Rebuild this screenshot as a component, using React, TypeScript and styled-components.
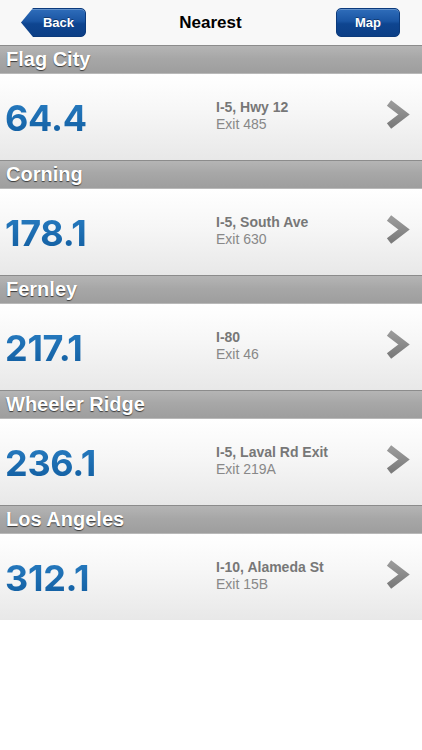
import React from "react";
import styled, { createGlobalStyle } from "styled-components";

const Global = createGlobalStyle`
  html, body { margin: 0; padding: 0; background: #ffffff; }
  body { font-family: "Liberation Sans", Arial, sans-serif; -webkit-font-smoothing: antialiased; }
`;

const Page = styled.div`
  width: 422px;
  min-height: 750px;
  background: #ffffff;
`;

const NavBar = styled.div`
  height: 45px;
  display: grid;
  grid-template-columns: 1fr auto 1fr;
  align-items: center;
  padding: 0 22px 0 21px;
  box-sizing: border-box;
  background: #f8f8f8;
`;

const Title = styled.div`
  font-size: 17px;
  font-weight: 700;
  color: #000;
  margin-top: 1px;
`;

const NavButton = styled.div<{ $back?: boolean }>`
  justify-self: ${(p) => (p.$back ? "start" : "end")};
  width: ${(p) => (p.$back ? "65px" : "64px")};
  height: 29px;
  box-sizing: border-box;
  display: flex;
  align-items: center;
  justify-content: center;
  padding-left: ${(p) => (p.$back ? "10px" : "0")};
  color: #fff;
  font-size: 13px;
  font-weight: 700;
  background: linear-gradient(#2f6dba 0%, #1a55a3 45%, #0e4590 55%, #0c3f86 100%);
  border: 1px solid #0b3a7c;
  border-radius: ${(p) => (p.$back ? "0 5px 5px 0" : "5px")};
  box-shadow: inset 0 1px 0 rgba(255, 255, 255, 0.25);
  clip-path: ${(p) =>
    p.$back ? "polygon(0 50%, 12px 0, 100% 0, 100% 100%, 12px 100%)" : "none"};
  text-shadow: 0 -1px 0 rgba(0, 0, 0, 0.35);
`;

const SectionHeader = styled.div`
  height: 29px;
  box-sizing: border-box;
  display: flex;
  align-items: center;
  padding-left: 6px;
  border-top: 1px solid #8c8c8c;
  border-bottom: 1px solid #b9b9b9;
  background: linear-gradient(#b5b5b5 0%, #a7a7a7 45%, #9e9e9e 100%);
  color: #fff;
  font-size: 20px;
  font-weight: 700;
  text-shadow: 0 1px 1px rgba(0, 0, 0, 0.65);
`;

const Row = styled.div`
  height: 86px;
  box-sizing: border-box;
  display: grid;
  grid-template-columns: 211px 1fr auto;
  align-items: center;
  padding: 0 12px 0 5px;
  background: linear-gradient(#ffffff 0%, #f6f6f6 45%, #e8e8e8 100%);
`;

const Miles = styled.div`
  font-family: Inter, "Liberation Sans", sans-serif;
  font-variant-numeric: proportional-nums;
  font-size: 36px;
  font-weight: 700;
  letter-spacing: -0.3px;
  color: #1767ab;
  background: linear-gradient(#2a7fc4, #0f5b9e);
  -webkit-background-clip: text;
  background-clip: text;
  -webkit-text-fill-color: transparent;
  margin-top: 1px;
`;

const Info = styled.div`
  display: flex;
  flex-direction: column;
  margin-bottom: 4px;
`;

const Road = styled.div`
  font-size: 14px;
  font-weight: 700;
  color: #777777;
  line-height: 17px;
`;

const ExitText = styled.div`
  font-size: 14px;
  color: #888888;
  line-height: 16px;
`;

const Chevron = styled.svg`
  width: 25px;
  height: 29px;
  margin-bottom: 5px;
  display: block;
`;

const ChevronIcon = () => (
  <Chevron viewBox="0 0 25 29">
    <defs>
      <linearGradient id="chev" x1="0" y1="0" x2="0" y2="1">
        <stop offset="0" stopColor="#9a9a9a" />
        <stop offset="1" stopColor="#7b7b7b" />
      </linearGradient>
    </defs>
    <polyline
      points="4,3 19,14.5 4,26"
      fill="none"
      stroke="url(#chev)"
      strokeWidth="7"
      strokeLinejoin="miter"
      strokeLinecap="butt"
    />
  </Chevron>
);

const places = [
  { name: "Flag City", miles: "64.4", road: "I-5, Hwy 12", exit: "Exit 485" },
  { name: "Corning", miles: "178.1", road: "I-5, South Ave", exit: "Exit 630" },
  { name: "Fernley", miles: "217.1", road: "I-80", exit: "Exit 46" },
  { name: "Wheeler Ridge", miles: "236.1", road: "I-5, Laval Rd Exit", exit: "Exit 219A" },
  { name: "Los Angeles", miles: "312.1", road: "I-10, Alameda St", exit: "Exit 15B" },
];

export default function App() {
  return (
    <Page>
      <Global />
      <NavBar>
        <NavButton $back>Back</NavButton>
        <Title>Nearest</Title>
        <NavButton>Map</NavButton>
      </NavBar>
      {places.map((p) => (
        <section key={p.name}>
          <SectionHeader>{p.name}</SectionHeader>
          <Row>
            <Miles>{p.miles}</Miles>
            <Info>
              <Road>{p.road}</Road>
              <ExitText>{p.exit}</ExitText>
            </Info>
            <ChevronIcon />
          </Row>
        </section>
      ))}
    </Page>
  );
}
